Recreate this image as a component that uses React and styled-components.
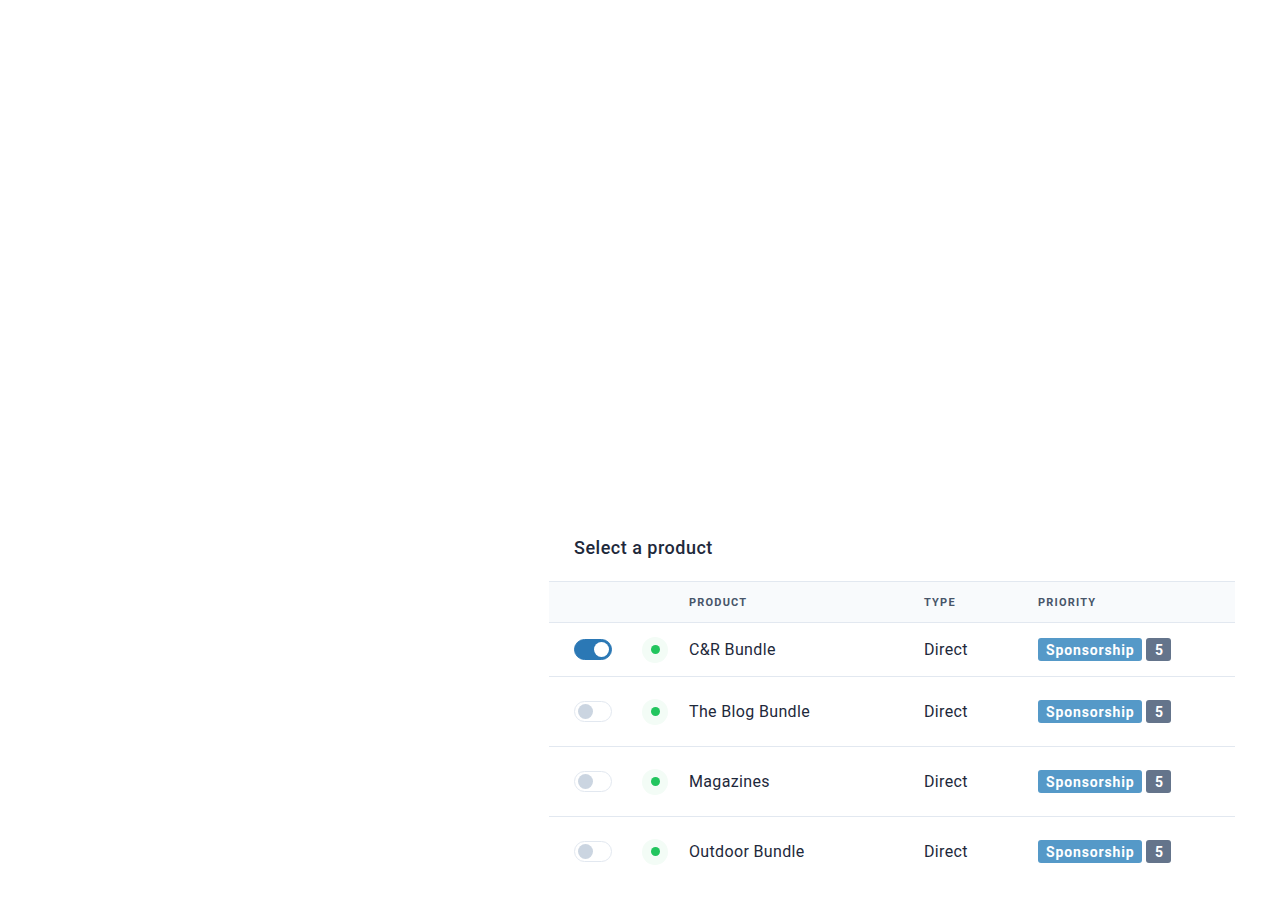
import styled, { createGlobalStyle } from 'styled-components';

const GlobalStyle = createGlobalStyle`
  html, body {
    margin: 0;
    padding: 0;
    background: #fff;
    font-family: Roboto, 'Liberation Sans', sans-serif;
  }
`;

const products = [
  { name: 'C&R Bundle', type: 'Direct', enabled: true },
  { name: 'The Blog Bundle', type: 'Direct', enabled: false },
  { name: 'Magazines', type: 'Direct', enabled: false },
  { name: 'Outdoor Bundle', type: 'Direct', enabled: false },
];

const App = () => {
  return (
    <>
      <GlobalStyle />
      <Page>
        <Panel>
          <PanelTitle>Select a product</PanelTitle>
          <HeaderRow>
            <span />
            <span />
            <HeaderCell>Product</HeaderCell>
            <HeaderCell>Type</HeaderCell>
            <HeaderCell>Priority</HeaderCell>
          </HeaderRow>
          {products.map((p, i) => (
            <ProductRow key={p.name} $compact={i === 0} $last={i === products.length - 1}>
              <Toggle $on={p.enabled}>
                <Knob $on={p.enabled} />
              </Toggle>
              <StatusHalo>
                <StatusDot />
              </StatusHalo>
              <Cell>{p.name}</Cell>
              <Cell>{p.type}</Cell>
              <BadgeGroup>
                <Badge>Sponsorship</Badge>
                <CountBadge>5</CountBadge>
              </BadgeGroup>
            </ProductRow>
          ))}
        </Panel>
      </Page>
    </>
  );
};

const Page = styled.div`
  width: 1272px;
  height: 916px;
  box-sizing: border-box;
  padding: 536px 37px 0 549px;
  overflow: hidden;
`;

const Panel = styled.div`
  display: flex;
  flex-direction: column;
  width: 686px;
`;

const PanelTitle = styled.div`
  padding-left: 25px;
  margin-bottom: 21px;
  color: #1e293b;
  font-size: 18px;
  font-weight: 500;
  line-height: 24px;
  letter-spacing: 0.5px;
`;

const gridColumns = `68px 47px 235px 114px 1fr`;

const HeaderRow = styled.div`
  display: grid;
  grid-template-columns: ${gridColumns};
  align-items: center;
  height: 40px;
  padding-left: 25px;
  background: #f8fafc;
  border-top: 1px solid #e2e8f0;
  border-bottom: 1px solid #e2e8f0;
`;

const HeaderCell = styled.div`
  color: #475569;
  font-size: 11px;
  font-weight: 700;
  letter-spacing: 1.2px;
  text-transform: uppercase;
`;

const ProductRow = styled.div`
  display: grid;
  grid-template-columns: ${gridColumns};
  align-items: center;
  height: ${({ $compact }) => ($compact ? '53px' : '69px')};
  padding-left: 25px;
  border-bottom: ${({ $last }) => ($last ? 'none' : '1px solid #e2e8f0')};
`;

const Toggle = styled.div`
  position: relative;
  box-sizing: border-box;
  width: 38px;
  height: 21px;
  border-radius: 11px;
  background: ${({ $on }) => ($on ? '#2b78b5' : '#fff')};
  border: 1px solid ${({ $on }) => ($on ? '#2b78b5' : '#e2e8f0')};
`;

const Knob = styled.span`
  position: absolute;
  top: 2px;
  left: ${({ $on }) => ($on ? '19px' : '3px')};
  width: 15px;
  height: 15px;
  border-radius: 50%;
  background: ${({ $on }) => ($on ? '#fff' : '#cbd5e1')};
`;

const StatusHalo = styled.div`
  display: flex;
  align-items: center;
  justify-content: center;
  width: 26px;
  height: 26px;
  border-radius: 50%;
  background: #f3fcf6;
`;

const StatusDot = styled.span`
  width: 9px;
  height: 9px;
  border-radius: 50%;
  background: #22c55e;
`;

const Cell = styled.div`
  color: #1e293b;
  font-size: 16px;
  line-height: 20px;
  letter-spacing: 0.35px;
`;

const BadgeGroup = styled.div`
  display: flex;
  align-items: center;
  gap: 4px;
`;

const Badge = styled.span`
  display: inline-flex;
  align-items: center;
  height: 23px;
  padding: 0 8px;
  border-radius: 3px;
  background: #5599c8;
  color: #fff;
  font-size: 14px;
  font-weight: 700;
  letter-spacing: 0.85px;
`;

const CountBadge = styled(Badge)`
  justify-content: center;
  width: 25px;
  padding: 0;
  background: #64748b;
  letter-spacing: 0;
`;

export default App;
